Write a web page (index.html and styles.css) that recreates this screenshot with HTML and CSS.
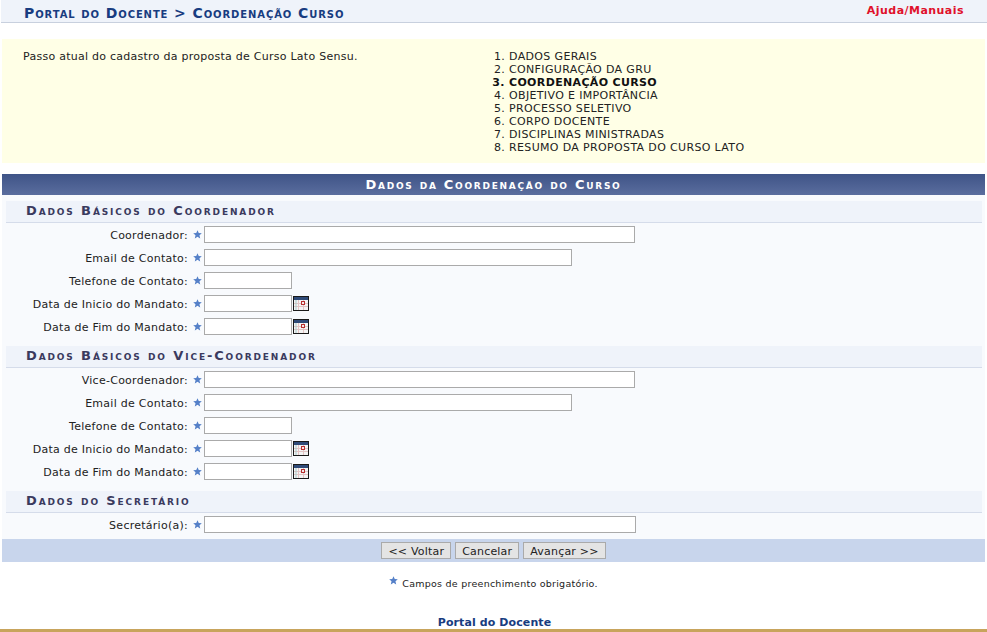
FILE: index.html
```html
<!DOCTYPE html>
<html lang="pt-BR">
<head>
  <meta charset="UTF-8" />
  <title>Portal do Docente</title>
  <link rel="stylesheet" href="styles.css">
</head>
<body>
  <svg width="0" height="0" class="defs">
    <symbol id="star" viewBox="0 0 10 10">
      <polygon points="5,0.3 6.4,3.4 9.8,3.7 7.2,5.9 8,9.4 5,7.6 2,9.4 2.8,5.9 0.2,3.7 3.6,3.4" />
    </symbol>
    <symbol id="cal" viewBox="0 0 16 15">
      <rect width="16" height="15" fill="#1a1a1a" />
      <rect x="1" y="1" width="14" height="3" fill="#2f4a78" />
      <rect x="1" y="4" width="14" height="10" fill="#f4f4f4" />
      <path d="M5.5 4v10M10.5 4v10M1 7.5h14M1 10.5h14" stroke="#e3c4c4" stroke-width="1" />
      <path d="M3 4v10" stroke="#a8c8c8" stroke-width="1" />
      <rect x="8.5" y="5.5" width="3" height="3" fill="#f4e8e8" stroke="#b83030" stroke-width="1" />
    </symbol>
  </svg>

  <div class="topbar">
    <h2 class="crumb">Portal do Docente &gt; Coordenação Curso</h2>
    <a class="help" href="#">Ajuda/Manuais</a>
  </div>

  <div class="steps">
    <p class="steps-text">Passo atual do cadastro da proposta de Curso Lato Sensu.</p>
    <ol class="steps-list">
      <li>DADOS GERAIS</li>
      <li>CONFIGURAÇÃO DA GRU</li>
      <li class="current">COORDENAÇÃO CURSO</li>
      <li>OBJETIVO E IMPORTÂNCIA</li>
      <li>PROCESSO SELETIVO</li>
      <li>CORPO DOCENTE</li>
      <li>DISCIPLINAS MINISTRADAS</li>
      <li>RESUMO DA PROPOSTA DO CURSO LATO</li>
    </ol>
  </div>

  <form class="form">
    <div class="form-title">Dados da Coordenação do Curso</div>
    <div class="form-body">
      <h3 class="section">Dados Básicos do Coordenador</h3>
      <div class="row"><label>Coordenador:</label><svg class="star"><use href="#star"/></svg><input class="w-lg" type="text"></div>
      <div class="row"><label>Email de Contato:</label><svg class="star"><use href="#star"/></svg><input class="w-md" type="text"></div>
      <div class="row"><label>Telefone de Contato:</label><svg class="star"><use href="#star"/></svg><input class="w-sm" type="text"></div>
      <div class="row"><label>Data de Inicio do Mandato:</label><svg class="star"><use href="#star"/></svg><input class="w-sm" type="text"><svg class="cal"><use href="#cal"/></svg></div>
      <div class="row"><label>Data de Fim do Mandato:</label><svg class="star"><use href="#star"/></svg><input class="w-sm" type="text"><svg class="cal"><use href="#cal"/></svg></div>

      <h3 class="section">Dados Básicos do Vice-Coordenador</h3>
      <div class="row"><label>Vice-Coordenador:</label><svg class="star"><use href="#star"/></svg><input class="w-lg" type="text"></div>
      <div class="row"><label>Email de Contato:</label><svg class="star"><use href="#star"/></svg><input class="w-md" type="text"></div>
      <div class="row"><label>Telefone de Contato:</label><svg class="star"><use href="#star"/></svg><input class="w-sm" type="text"></div>
      <div class="row"><label>Data de Inicio do Mandato:</label><svg class="star"><use href="#star"/></svg><input class="w-sm" type="text"><svg class="cal"><use href="#cal"/></svg></div>
      <div class="row"><label>Data de Fim do Mandato:</label><svg class="star"><use href="#star"/></svg><input class="w-sm" type="text"><svg class="cal"><use href="#cal"/></svg></div>

      <h3 class="section">Dados do Secretário</h3>
      <div class="row"><label>Secretário(a):</label><svg class="star"><use href="#star"/></svg><input class="w-xl" type="text"></div>
    </div>
    <div class="form-actions">
      <button type="button">&lt;&lt; Voltar</button>
      <button type="button">Cancelar</button>
      <button type="button">Avançar &gt;&gt;</button>
    </div>
  </form>

  <p class="note"><svg class="star note-star"><use href="#star"/></svg>Campos de preenchimento obrigatório.</p>

  <div class="footer"><a href="#">Portal do Docente</a></div>
</body>
</html>
```

FILE: styles.css
```css
* {
  box-sizing: border-box;
}

html, body {
  height: 632px;
  overflow: hidden;
}

body {
  margin: 0;
  font-family: "DejaVu Sans", Verdana, sans-serif;
  font-size: 11px;
  letter-spacing: 0.26px;
  color: #222;
  background-color: #fff;
  display: flex;
  flex-direction: column;
}

.defs {
  position: absolute;
}

.topbar {
  height: 23px;
  margin-left: 1px;
  padding: 5px 23px 0;
  display: flex;
  justify-content: space-between;
  background-color: #eff3fa;
  border-bottom: 1px solid #c8d0de;
}

.crumb {
  margin: 0;
  font-size: 14px;
  line-height: 16px;
  font-weight: bold;
  font-variant: small-caps;
  letter-spacing: 0.9px;
  color: #183c80;
}

.help {
  font-size: 11px;
  line-height: 11px;
  font-weight: bold;
  letter-spacing: 0.46px;
  color: #e0112b;
  text-decoration: none;
}

.steps {
  height: 124px;
  margin: 16px 2px 0;
  padding: 11px 21px;
  display: flex;
  background-color: #ffffe6;
  line-height: 13px;
}

.steps-text {
  width: 449px;
  margin: 0;
}

.steps-list {
  margin: 0;
  padding: 0 0 0 37px;
  letter-spacing: 0.35px;
}

.current {
  font-weight: bold;
  color: #111;
}

.form {
  margin: 11px 2px 0;
}

.form-title {
  height: 21px;
  text-align: center;
  font-size: 13px;
  line-height: 21px;
  font-weight: bold;
  font-variant: small-caps;
  letter-spacing: 1.72px;
  color: #fff;
  background: linear-gradient(#3f5487, #5a6d9e);
}

.form-body {
  padding: 6px 3px 3px 4px;
  background-color: #f8fafd;
}

.section {
  height: 22px;
  margin: 0;
  padding-left: 20px;
  font-size: 13px;
  line-height: 20px;
  font-weight: bold;
  font-variant: small-caps;
  letter-spacing: 1.87px;
  color: #3a3a5e;
  background-color: #eff3fa;
  border-bottom: 1px solid #d5dcea;
}

.row {
  height: 23px;
  display: flex;
  align-items: center;
}

.row + .section {
  margin-top: 8px;
}

.row label {
  width: 182px;
  padding-top: 2px;
  text-align: right;
}

.star {
  width: 9px;
  height: 9px;
  fill: #5580c8;
}

.row .star {
  margin: 0 2px 0 5px;
}

.row input {
  height: 17px;
  padding: 0;
  background-color: #fff;
  border: 1px solid #aaa;
}

.w-sm { width: 88px; }
.w-md { width: 368px; }
.w-lg { width: 431px; }
.w-xl { width: 432px; }

.cal {
  width: 16px;
  height: 15px;
  margin-left: 1px;
}

.form-actions {
  height: 23px;
  display: flex;
  justify-content: center;
  align-items: center;
  gap: 4px;
  background-color: #c8d5ec;
}

.form-actions button {
  height: 17px;
  padding: 1px 6px 0;
  font-family: inherit;
  font-size: 11px;
  letter-spacing: 0.2px;
  color: #222;
  background-color: #e4e4e4;
  border: 1px solid #aaa;
}

.note {
  margin: 14px 0 0;
  text-align: center;
  font-size: 9.5px;
  line-height: 12px;
  letter-spacing: 0.25px;
}

.note-star {
  margin-right: 4px;
  vertical-align: 2px;
}

.footer {
  margin-top: auto;
  height: 17px;
  padding-left: 2px;
  text-align: center;
  font-size: 11px;
  line-height: 15px;
  font-weight: bold;
  letter-spacing: 0.1px;
  border-bottom: 3px solid #c8a45c;
}

.footer a {
  color: #183c80;
  text-decoration: none;
}
```
